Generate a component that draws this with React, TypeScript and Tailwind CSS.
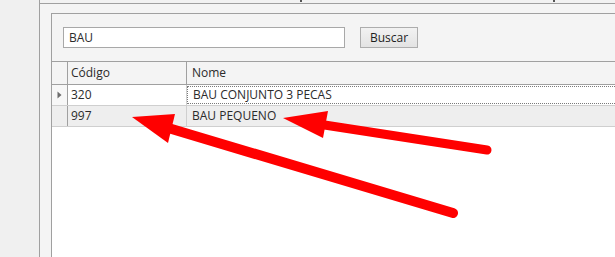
import React from "react";

export default function App() {
  return (
    <div className="relative w-[615px] h-[257px] overflow-hidden bg-[#f0f0f0] flex font-['Open_Sans',sans-serif] text-[12px] text-[#2b2b2b]">
      {/* left strip */}
      <div className="w-[39px] shrink-0 bg-[#f0f0f0]" />

      <div className="flex-1 flex flex-col border-l border-[#a0a0a0] bg-[#f2f2f2] pt-[3px]">
        <div className="flex-1 flex flex-col border-t border-[#a0a0a0] bg-[#f4f4f4] pl-[11px] pt-[9px]">
          <div className="flex-1 flex flex-col border-l border-t border-[#a0a0a0] bg-[#f4f4f4]">
            {/* search */}
            <div className="flex items-center gap-[15px] pl-[11px] pt-[13px]">
              <div className="w-[282px] h-[21px] border border-[#a8a8a8] bg-white flex items-center pl-[5px] leading-none">
                BAU
              </div>
              <button className="w-[58px] h-[21px] border border-[#adadad] bg-gradient-to-b from-[#f2f2f2] to-[#e3e3e3] flex items-center justify-center leading-none text-[#1e1e1e]">
                Buscar
              </button>
            </div>

            {/* grid */}
            <div className="mt-[13px] flex-1 flex flex-col border-t border-[#a0a0a0] bg-white">
              <div className="flex h-[23px] bg-[#f4f4f4] border-b border-[#a0a0a0]">
                <div className="w-[16px] border-r border-[#a0a0a0]" />
                <div className="w-[119px] border-r border-[#a0a0a0] flex items-center pl-[3px]">Código</div>
                <div className="flex-1 flex items-center pl-[5px]">Nome</div>
              </div>

              <div className="flex h-[21px] bg-white border-b border-[#cfcfcf]">
                <div className="w-[16px] border-r border-[#a0a0a0] bg-[#f7f7f7] flex items-center justify-center">
                  <svg width="5" height="8" viewBox="0 0 5 8">
                    <path d="M0.5 0.5 L4.5 4 L0.5 7.5 Z" fill="#6d6d6d" />
                  </svg>
                </div>
                <div className="w-[119px] border-r border-[#cfcfcf] flex items-center pl-[3px]">320</div>
                <div className="flex-1 flex items-center pl-[5px] border-y border-l border-dotted border-[#7a7a7a] my-[1px] -mr-[4px]">
                  BAU CONJUNTO 3 PECAS
                </div>
              </div>

              <div className="flex h-[21px] bg-[#eeeeee] border-b border-[#cfcfcf]">
                <div className="w-[16px] border-r border-[#a0a0a0]" />
                <div className="w-[119px] border-r border-[#cfcfcf] flex items-center pl-[3px]">997</div>
                <div className="flex-1 flex items-center pl-[5px]">BAU PEQUENO</div>
              </div>

              <div className="flex-1 bg-white" />
            </div>
          </div>
        </div>
      </div>

      {/* annotation arrows */}
      <svg className="absolute inset-0 pointer-events-none" width="615" height="257" viewBox="0 0 615 257">
        <rect x="300" y="0" width="2" height="2" fill="#555" />
        <rect x="553" y="0" width="2" height="2" fill="#555" />
        <line x1="487" y1="150" x2="318" y2="124" stroke="#ff0000" strokeWidth="9" strokeLinecap="round" />
        <polygon points="283,118 328,111 323,138" fill="#ff0000" />
        <line x1="453" y1="213" x2="165" y2="127" stroke="#ff0000" strokeWidth="10" strokeLinecap="round" />
        <polygon points="132,117 175,114 168,143" fill="#ff0000" />
      </svg>
    </div>
  );
}
